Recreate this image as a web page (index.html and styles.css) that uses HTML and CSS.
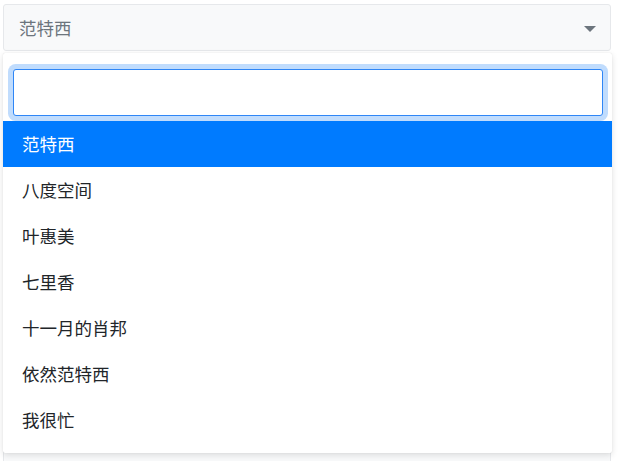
FILE: index.html
```html
<!DOCTYPE html>
<html lang="zh">
<head>
<meta charset="utf-8">
<link rel="stylesheet" href="styles.css">
</head>
<body>
<div class="wrap">
  <div class="select">
    <span class="value">范特西</span>
    <span class="caret"></span>
  </div>
  <div class="under"></div>
  <div class="dropdown">
    <input class="search" type="text">
    <ul class="options">
      <li class="active">范特西</li>
      <li>八度空间</li>
      <li>叶惠美</li>
      <li>七里香</li>
      <li>十一月的肖邦</li>
      <li>依然范特西</li>
      <li>我很忙</li>
    </ul>
  </div>
</div>
</body>
</html>
```
FILE: styles.css
```css
* { box-sizing: border-box; }
html, body { margin: 0; padding: 0; background: #fff; }
body {
  font-family: "Noto Sans CJK SC", "Microsoft YaHei", sans-serif;
  font-size: 17.5px;
  color: #212529;
}
.wrap {
  position: relative;
  padding: 4px 7px 0 3px;
}
.select {
  height: 47px;
  border: 1px solid #e6e8eb;
  border-radius: 3px;
  background: #f8f9fa;
  display: flex;
  align-items: center;
  justify-content: space-between;
  padding: 0 14px 0 15px;
}
.value { color: #6c757d; line-height: 1; }
.caret {
  width: 0; height: 0;
  border-left: 6px solid transparent;
  border-right: 6px solid transparent;
  border-top: 6px solid #6c757d;
  margin-top: 2px;
}
.under {
  margin-top: 6px;
  height: 420px;
  border: 1px solid #e6e8eb;
  background: #f8f9fa;
}
.dropdown {
  position: absolute;
  left: 3px;
  top: 53px;
  width: 609px;
  height: 400px;
  background: #fff;
  border-radius: 2px;
  box-shadow: 0 2px 6px rgba(0,0,0,0.12), 0 0 1px rgba(0,0,0,0.15);
  padding: 16px 0 0 0;
}
.search {
  display: block;
  margin: 0 9px 5px 10px;
  width: 590px;
  height: 47px;
  border: 1px solid #2f86f6;
  border-radius: 3px;
  box-shadow: 0 0 0 5px #c0dcfd;
  outline: none;
  background: #fff;
  font: inherit;
}
.options { list-style: none; margin: 0; padding: 0; }
.options li {
  height: 46px;
  line-height: 46px;
  padding-left: 19px;
  color: #212529;
}
.options li.active { background: #007bff; color: #fff; }
```
